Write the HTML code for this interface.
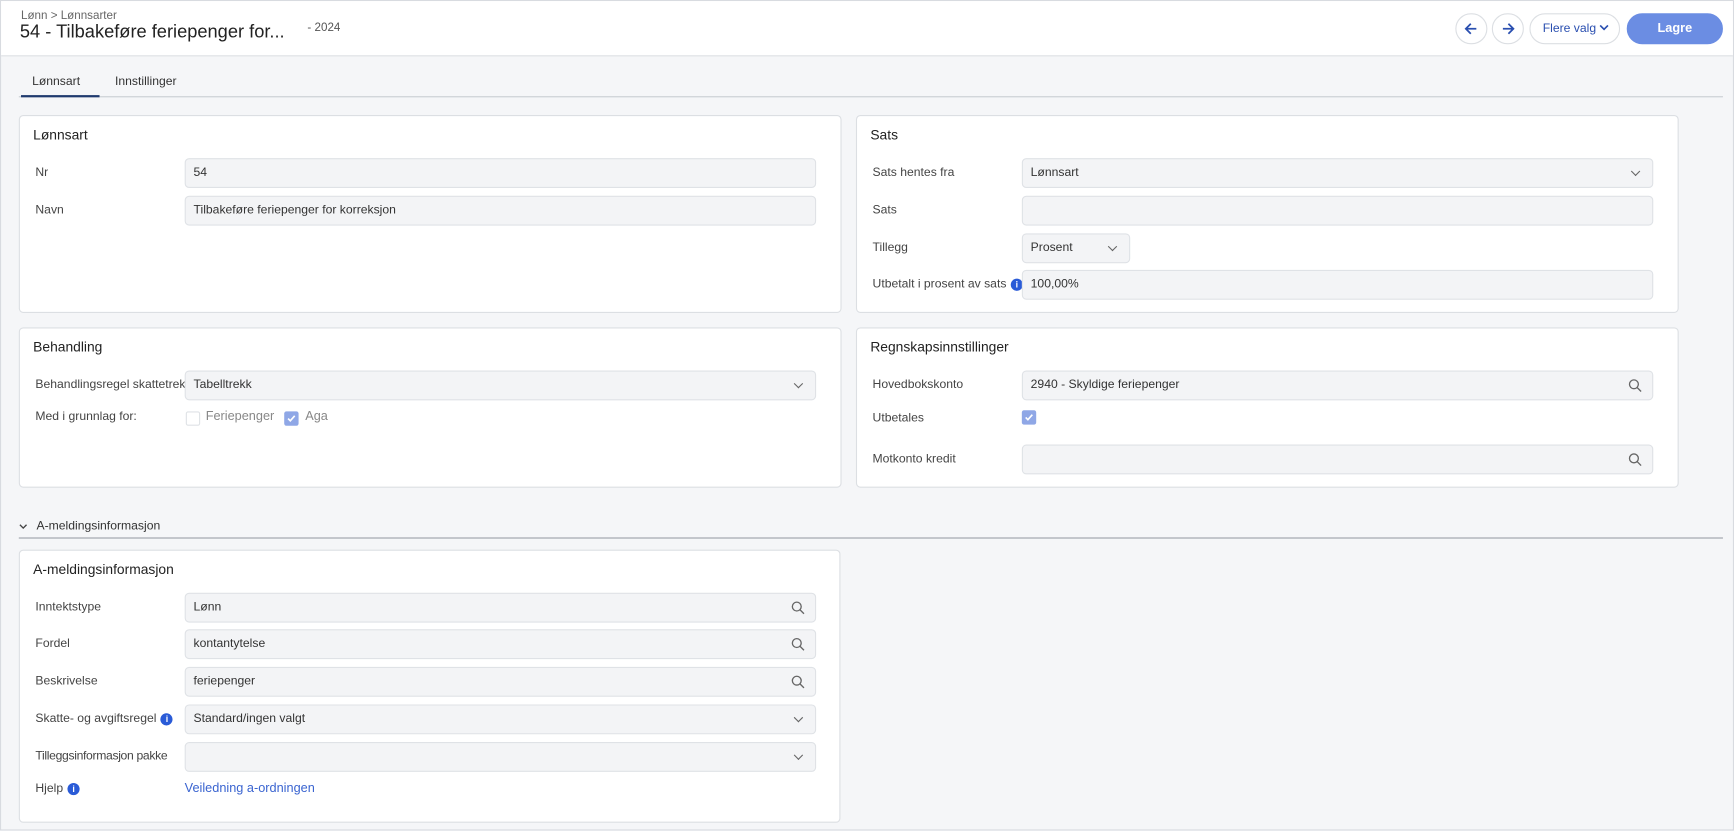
<!DOCTYPE html><html><head><style>
*{box-sizing:border-box;margin:0;padding:0}
body{width:1734px;height:831px;background:#f5f6f8;font-family:"Liberation Sans",sans-serif;color:#333;overflow:hidden;font-size:12px}
#w{position:absolute;left:0;top:0;width:1568px;height:751px;transform:scale(1.10587);transform-origin:0 0;border:1px solid #d8dbe0}
.abs{position:absolute}
.hdr{left:0;top:0;width:1566px;height:50px;background:#fff;border-bottom:1px solid #dcdfe3}
.panel{position:absolute;background:#fff;border:1px solid #dcdfe3;border-radius:4px}
.pt{position:absolute;left:12px;top:10px;font-size:12.5px;color:#222}
.lbl{position:absolute;font-size:11px;color:#444;white-space:nowrap}
.inp{position:absolute;height:27px;background:#f3f4f6;border:1px solid #dfe2e6;border-radius:4px;font-size:11px;color:#333;padding:0 7px;line-height:25px}
.chev{position:absolute;right:12px;top:8px;width:6px;height:6px;border-right:1.2px solid #666;border-bottom:1.2px solid #666;transform:rotate(45deg)}
.mag{position:absolute;right:9px;top:6px}
.info{display:inline-block;width:11px;height:11px;border-radius:50%;background:#2a5bd7;color:#fff;font-size:8px;font-weight:bold;text-align:center;line-height:11px;vertical-align:0;margin-left:4px}
.cb{position:absolute;width:13px;height:13px;border-radius:2px}
.btn{position:absolute;top:11px;height:28px;border:1px solid #dcdfe3;border-radius:14px;background:#fff;color:#2a4fb0}
</style></head><body><div id="w">
<div class="abs hdr"></div>
<div class="abs" style="left:18px;top:7px;font-size:10.5px;color:#666">Lønn &gt; Lønnsarter</div>
<div class="abs" style="left:17px;top:19px;font-size:16.5px;color:#222">54 - Tilbakeføre feriepenger for...</div>
<div class="abs" style="left:277px;top:18px;font-size:10.5px;color:#555">- 2024</div>
<div class="btn" style="left:1315px;width:29px"><svg width="27" height="26"><path d="M18 13H9M13 8.5L8.5 13l4.5 4.5" stroke="#2a4fb0" stroke-width="1.6" fill="none"/></svg></div>
<div class="btn" style="left:1348px;width:29px"><svg width="27" height="26"><path d="M9 13h9M14 8.5l4.5 4.5L14 17.5" stroke="#2a4fb0" stroke-width="1.6" fill="none"/></svg></div>
<div class="btn" style="left:1382px;width:82px;font-size:11px;line-height:26px;padding-left:11px">Flere valg <svg width="9" height="8" style="vertical-align:0"><path d="M1 2l3.5 3.5L8 2" stroke="#2a4fb0" stroke-width="1.5" fill="none"/></svg></div>
<div class="btn" style="left:1470px;width:87px;background:#6b8de3;border-color:#6b8de3;color:#fff;font-weight:bold;text-align:center;line-height:26px;font-size:11.5px">Lagre</div>
<div class="abs" style="left:28px;top:67px;color:#333;font-size:11px">Lønnsart</div>
<div class="abs" style="left:103px;top:67px;color:#333;font-size:11px">Innstillinger</div>
<div class="abs" style="left:16px;top:86px;width:1541px;height:1px;background:#c9cdd3"></div>
<div class="abs" style="left:18px;top:85px;width:71px;height:2px;background:#1f3a6e"></div>

<div class="panel" style="left:16px;top:103px;width:744px;height:179px"><div class="pt">Lønnsart</div></div>
<div class="lbl" style="left:31px;top:149px">Nr</div><div class="inp" style="left:166px;top:142px;width:571px">54</div>
<div class="lbl" style="left:31px;top:183px">Navn</div><div class="inp" style="left:166px;top:176px;width:571px">Tilbakeføre feriepenger for korreksjon</div>

<div class="panel" style="left:773px;top:103px;width:744px;height:179px"><div class="pt">Sats</div></div>
<div class="lbl" style="left:788px;top:149px">Sats hentes fra</div><div class="inp" style="left:923px;top:142px;width:571px">Lønnsart<div class="chev"></div></div>
<div class="lbl" style="left:788px;top:183px">Sats</div><div class="inp" style="left:923px;top:176px;width:571px"></div>
<div class="lbl" style="left:788px;top:217px">Tillegg</div><div class="inp" style="left:923px;top:210px;width:98px">Prosent<div class="chev"></div></div>
<div class="lbl" style="left:788px;top:250px">Utbetalt i prosent av sats<span class="info">i</span></div><div class="inp" style="left:923px;top:243px;width:571px">100,00%</div>

<div class="panel" style="left:16px;top:295px;width:744px;height:145px"><div class="pt">Behandling</div></div>
<div class="lbl" style="left:31px;top:341px;width:135px;overflow:hidden">Behandlingsregel skattetrekk</div><div class="inp" style="left:166px;top:334px;width:571px">Tabelltrekk<div class="chev"></div></div>
<div class="lbl" style="left:31px;top:370px">Med i grunnlag for:</div>
<div class="cb" style="left:167px;top:371px;border:1px solid #dfe2e6;background:#fff"></div>
<div class="lbl" style="left:185px;top:370px;color:#888;font-size:11.5px">Feriepenger</div>
<div class="cb" style="left:256px;top:371px;background:#8fa7e6"><svg width="13" height="13"><path d="M3.5 6.5l2 2 4-4.5" stroke="#fff" stroke-width="1.5" fill="none"/></svg></div>
<div class="lbl" style="left:275px;top:370px;color:#888;font-size:11.5px">Aga</div>

<div class="panel" style="left:773px;top:295px;width:744px;height:145px"><div class="pt">Regnskapsinnstillinger</div></div>
<div class="lbl" style="left:788px;top:341px">Hovedbokskonto</div><div class="inp" style="left:923px;top:334px;width:571px">2940 - Skyldige feriepenger<svg class="mag" width="13" height="13"><circle cx="5.5" cy="5.5" r="4" stroke="#666" stroke-width="1.2" fill="none"/><path d="M8.5 8.5l3.5 3.5" stroke="#666" stroke-width="1.2"/></svg></div>
<div class="lbl" style="left:788px;top:371px">Utbetales</div>
<div class="cb" style="left:923px;top:370px;background:#8fa7e6"><svg width="13" height="13"><path d="M3.5 6.5l2 2 4-4.5" stroke="#fff" stroke-width="1.5" fill="none"/></svg></div>
<div class="lbl" style="left:788px;top:408px">Motkonto kredit</div><div class="inp" style="left:923px;top:401px;width:571px"><svg class="mag" width="13" height="13"><circle cx="5.5" cy="5.5" r="4" stroke="#666" stroke-width="1.2" fill="none"/><path d="M8.5 8.5l3.5 3.5" stroke="#666" stroke-width="1.2"/></svg></div>

<svg class="abs" style="left:16px;top:471px" width="8" height="8"><path d="M1 2.5l3 3 3-3" stroke="#444" stroke-width="1.2" fill="none"/></svg>
<div class="abs" style="left:32px;top:469px;color:#333;font-size:11px">A-meldingsinformasjon</div>
<div class="abs" style="left:16px;top:485px;width:1541px;height:1px;background:#9aa0a8"></div>

<div class="panel" style="left:16px;top:496px;width:743px;height:247px"><div class="pt">A-meldingsinformasjon</div></div>
<div class="lbl" style="left:31px;top:542px">Inntektstype</div><div class="inp" style="left:166px;top:535px;width:571px">Lønn<svg class="mag" width="13" height="13"><circle cx="5.5" cy="5.5" r="4" stroke="#666" stroke-width="1.2" fill="none"/><path d="M8.5 8.5l3.5 3.5" stroke="#666" stroke-width="1.2"/></svg></div>
<div class="lbl" style="left:31px;top:575px">Fordel</div><div class="inp" style="left:166px;top:568px;width:571px">kontantytelse<svg class="mag" width="13" height="13"><circle cx="5.5" cy="5.5" r="4" stroke="#666" stroke-width="1.2" fill="none"/><path d="M8.5 8.5l3.5 3.5" stroke="#666" stroke-width="1.2"/></svg></div>
<div class="lbl" style="left:31px;top:609px">Beskrivelse</div><div class="inp" style="left:166px;top:602px;width:571px">feriepenger<svg class="mag" width="13" height="13"><circle cx="5.5" cy="5.5" r="4" stroke="#666" stroke-width="1.2" fill="none"/><path d="M8.5 8.5l3.5 3.5" stroke="#666" stroke-width="1.2"/></svg></div>
<div class="lbl" style="left:31px;top:643px">Skatte- og avgiftsregel<span class="info">i</span></div><div class="inp" style="left:166px;top:636px;width:571px">Standard/ingen valgt<div class="chev"></div></div>
<div class="lbl" style="left:31px;top:677px;letter-spacing:-0.3px">Tilleggsinformasjon pakke</div><div class="inp" style="left:166px;top:670px;width:571px"><div class="chev"></div></div>
<div class="lbl" style="left:31px;top:706px">Hjelp<span class="info">i</span></div>
<div class="lbl" style="left:166px;top:706px;color:#3a64d0;font-size:11.5px">Veiledning a-ordningen</div>
</div></body></html>
